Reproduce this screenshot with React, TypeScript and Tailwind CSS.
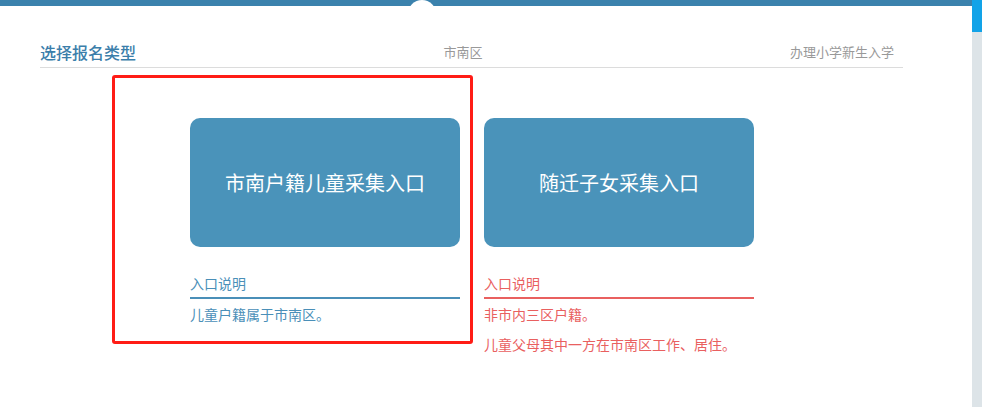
import React from "react";

const cjk = { fontFamily: '"Noto Sans CJK SC", "Liberation Sans", sans-serif' };

interface EntryProps {
  title: string;
  notes: string[];
  tone: "blue" | "red";
}

function EntryCard({ title, notes, tone }: EntryProps) {
  const isBlue = tone === "blue";
  return (
    <div className="w-[270px]">
      <button className="flex h-[129px] w-full items-center justify-center rounded-[10px] bg-[#4a93ba] text-[20px] text-white">
        {title}
      </button>
      <div
        className={
          isBlue
            ? "mt-[26px] border-b-2 border-[#4a8fb8] pb-1 text-[14px] leading-[20px] text-[#4a8fb8]"
            : "mt-[26px] border-b-2 border-[#e9605f] pb-1 text-[14px] leading-[20px] text-[#e9605f]"
        }
      >
        入口说明
      </div>
      {notes.map((n) => (
        <p
          key={n}
          className={
            isBlue
              ? "text-[14px] leading-[30px] text-[#4a8fb8]"
              : "text-[14px] leading-[30px] text-[#e9605f]"
          }
        >
          {n}
        </p>
      ))}
    </div>
  );
}

export default function App() {
  return (
    <div className="flex h-[407px] w-[982px] overflow-hidden bg-white" style={cjk}>
      <div className="flex-1">
        <div className="relative h-[6px] bg-[#3b82ad]">
          <div className="absolute left-[408px] top-0 h-[28px] w-[28px] rounded-full bg-white" />
        </div>

        <div className="relative mx-[40px] mt-[34px] w-[863px] border-b border-[#dcdcdc] pb-[3px]">
          <div className="flex h-[24px] items-center justify-between pr-[9px]">
            <h2 className="text-[16px] font-medium text-[#3b7eaa]">选择报名类型</h2>
            <span className="text-[13px] text-[#999]">市南区</span>
            <span className="text-[13px] text-[#999]">办理小学新生入学</span>
          </div>
        </div>

        <div className="ml-[112px] mt-[7px] flex items-start">
          <div className="h-[269px] w-[361px] rounded-[3px] border-[3px] border-[#ff1c16] pl-[75px] pt-[40px]">
            <EntryCard title="市南户籍儿童采集入口" notes={["儿童户籍属于市南区。"]} tone="blue" />
          </div>
          <div className="ml-[11px] pt-[43px]">
            <EntryCard
              title="随迁子女采集入口"
              notes={["非市内三区户籍。", "儿童父母其中一方在市南区工作、居住。"]}
              tone="red"
            />
          </div>
        </div>
      </div>

      <div className="flex w-[10px] flex-col bg-[#dde4e8]">
        <div className="h-[32px] bg-[#12a3e8]" />
      </div>
    </div>
  );
}
